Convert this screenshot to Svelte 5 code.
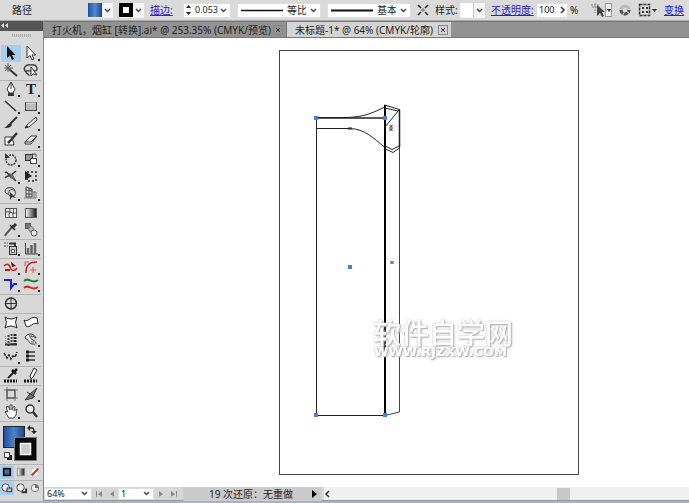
<script>
  const arrow = 'M5 1 L5 13 L8 10.5 L10 15 L12 14 L10 10 L13.500 10 Z';

  const groups = [
    [
      { n: 'Selection', active: true, s: `<path d="${arrow}" fill="#151515"/>` },
      { n: 'Direct selection', more: true, s: `<path d="${arrow}" fill="#fff" stroke="#333"/>` }
      ,
      { n: 'Magic wand', s: '<path d="M7 7 L15 14" stroke="#333" stroke-width="2"/><path d="M6 1 V10 M2 6 H11 M3 3 L9 9 M9 3 L3 9" stroke="#555"/>' },
      { n: 'Lasso', s: '<path d="M4 10 C0 6 4 2 9 3 C15 2 17 8 13 9 C9 10 4 7 4 10 C4 12 8 12 7 14" fill="none" stroke="#444" stroke-width="1.500"/><path d="M9 5 V14 L11 12 L15 13 Z" fill="#fff" stroke="#333"/>' }
    ],
    [
      { n: 'Pen', more: true, s: '<path d="M9 1 L13 8 L11 12 H7 L5 8 Z" fill="#fff" stroke="#333"/><path d="M9 2 V8" stroke="#333"/><rect x="6" y="12" width="6" height="3" fill="#333"/>' },
      { n: 'Type', more: true, text: 'T' },
      { n: 'Line', more: true, s: '<path d="M3 3 L14 13" stroke="#333" stroke-width="1.500"/>' },
      { n: 'Rectangle', more: true, s: '<rect x="3.500" y="4.500" width="11" height="8" fill="#bbb" stroke="#444"/><path d="M4 5 H14" stroke="#eee"/>' },
      { n: 'Brush', s: '<path d="M15 2 L8 9" stroke="#333" stroke-width="2"/><path d="M9 8 L10 10 C8 13 6 13 2 13 C5 12 5 9 9 8" fill="#333"/>' },
      { n: 'Pencil', more: true, s: '<path d="M14 2 L15 5 L7 12 L3 13 L5 10 Z" fill="#eee" stroke="#333"/><path d="M3 13 L6 12 L5 10Z" fill="#222"/>' },
      { n: 'Blob brush', s: '<path d="M3 5 H10 L12 13 H3 Z" fill="#fff" stroke="#333"/><path d="M15 1 L8 9 L6 11" stroke="#333" stroke-width="2.500"/>' },
      { n: 'Eraser', more: true, s: '<path d="M3 10 L9 4 H15 L9 12 H3 Z M3 10 H9 L15 4" fill="#fff" stroke="#333"/>' }
    ],
    [
      { n: 'Rotate', more: true, s: '<circle cx="9" cy="9" r="5" fill="none" stroke="#333" stroke-width="1.500" stroke-dasharray="2 1"/><path d="M3 2 V7 H8 Z" fill="#333"/>' },
      { n: 'Scale', more: true, s: '<rect x="3.500" y="3.500" width="7" height="6" fill="#999" stroke="#333"/><rect x="8.500" y="7.500" width="6" height="5" fill="#fff" stroke="#444"/><path d="M10 3 H14 V6" fill="none" stroke="#444"/>' },
      { n: 'Width', more: true, s: '<path d="M3 5 C5 2 6 8 9 7 L14 3 M3 10 C6 6 9 8 14 13" fill="none" stroke="#333" stroke-width="1.500"/><path d="M7 5 L11 7 L14 12 L8 10 Z" fill="#666"/>' },
      { n: 'Free transform', s: '<rect x="5" y="4" width="9" height="9" fill="none" stroke="#222" stroke-width="1.500" stroke-dasharray="2 2"/><path d="M3 3 V12 L10 8 Z" fill="#222"/>' },
      { n: 'Shape builder', more: true, s: '<ellipse cx="8" cy="6" rx="5" ry="3.500" fill="#ccc" stroke="#444"/><circle cx="10" cy="8" r="3.500" fill="#ddd" stroke="#555"/><path d="M8 7 V15 L10 12 L14 13 Z" fill="#333"/>' },
      { n: 'Perspective grid', more: true, s: '<path d="M4 2 L10 4 V12 H4 Z M4 5 L10 6 M4 9 H10 M7 3 V12" fill="#ddd" stroke="#444"/><path d="M10 7 H14 V13 H2 M12 7 V13" fill="none" stroke="#777"/>' }
    ],
    [
      { n: 'Mesh', s: '<rect x="3.500" y="4.500" width="11" height="9" fill="#eee" stroke="#555"/><path d="M3 9 C7 5 11 12 15 8 M7 4 C10 8 5 10 8 14 M11 4 C13 8 9 10 12 14" fill="none" stroke="#444"/>' },
      { n: 'Gradient', s: '<defs><linearGradient id="tool-gradient"><stop stop-color="#fff"/><stop offset="1" stop-color="#111"/></linearGradient></defs><rect x="3.500" y="4.500" width="11" height="9" fill="url(#tool-gradient)" stroke="#555"/>' },
      { n: 'Eyedropper', more: true, s: '<path d="M11 5 L4 13 L3 15" stroke="#555" stroke-width="2"/><path d="M8 4 L13 9" stroke="#222" stroke-width="1.500"/><path d="M11 6 L14 3" stroke="#333" stroke-width="3"/>' },
      { n: 'Blend', s: '<rect x="3.500" y="2.500" width="5" height="5" fill="#777" stroke="#555"/><circle cx="9" cy="8" r="2.500" fill="#bbb" stroke="#777"/><circle cx="12" cy="12" r="3" fill="#eee" stroke="#555"/>' }
    ],
    [
      { n: 'Symbol sprayer', more: true, s: '<rect x="7.500" y="6.500" width="7" height="8" fill="#ccc" stroke="#333"/><path d="M7 3.500 H13 V6" fill="none" stroke="#333" stroke-width="2"/><path d="M9.500 9.500 H12.500 V12.500 H9.500Z" fill="#fff" stroke="#555"/><path d="M2 3 H6 M2 6 H6" stroke="#555" stroke-dasharray="2 1"/>' },
      { n: 'Graph', more: true, s: '<path d="M3.500 3 V14 H16" fill="none" stroke="#444"/><path d="M6 14 V8 M9.500 14 V5 M13 14 V3" stroke="#666" stroke-width="2.500"/>' }
    ],
    [
      { n: 'Reshape path', more: true, s: '<path d="M2 7 C6 3 8 7 9 10 C10 12 13 12 15 9" fill="none" stroke="#c21d1d" stroke-width="1.500"/><path d="M9 3 L14 7 L10 8 Z" fill="#5a1111"/><path d="M3 11 H8" stroke="#b02020" stroke-width="2"/>' },
      { n: 'Round corner', more: true, s: '<path d="M4 14 C4 6 7 3 15 3" fill="none" stroke="#b32727" stroke-width="1.500"/><path d="M3 3 H7 M3 3 V7 M11 8 V14 M8 11 H14" stroke="#e05252"/>' },
      { n: 'Corner path', more: true, s: '<path d="M2 4 H9 V12 L12 8 H15" fill="none" stroke="#2020c8" stroke-width="2"/>' },
      { n: 'Parallel path', more: true, s: '<path d="M2 5 C7 0 9 9 16 4" fill="none" stroke="#16803a" stroke-width="2"/><path d="M2 12 C7 7 9 16 16 11" fill="none" stroke="#cf2b2b" stroke-width="2"/>' }
    ],
    [
      { n: 'Target', s: '<circle cx="9" cy="8.500" r="5.500" fill="none" stroke="#333" stroke-width="1.500"/><path d="M9 2 V15 M3 8.500 H15" stroke="#333"/>' }
    ],
    [
      { n: 'Envelope', s: '<path d="M3 3 Q9 7 15 3 Q12 8 15 14 Q9 10 3 14 Q6 8 3 3Z" fill="#fff" stroke="#222"/>' },
      { n: 'Flag warp', s: '<path d="M2 6 C6 9 9 1 15 4 L16 10 C11 7 8 15 4 12 Z" fill="#fff" stroke="#222"/>' },
      { n: 'Halftone', s: '<path d="M3.500 5 V15" stroke="#888" stroke-dasharray="1 1"/><path d="M6.500 4 V15 M9.500 3 V15" stroke="#444" stroke-width="2" stroke-dasharray="2 1"/><path d="M13 3 V15" stroke="#222" stroke-width="3" stroke-dasharray="2 1"/><path d="M3 13.500 H15" stroke="#333" stroke-width="2"/>' },
      { n: 'Twirl', more: true, s: '<path d="M3 6 C6 1 13 3 14 7 C9 3 6 7 11 9 C15 11 15 14 11 13 C6 13 8 9 4 8Z" fill="#eee" stroke="#333"/><path d="M7 5 H10 M9 11 H12" stroke="#555"/>' },
      { n: 'Zigzag', more: true, s: '<path d="M2 5 L5 10 L7 7 L9 11 L11 8 L13 9 L15 4" fill="none" stroke="#222" stroke-width="1.500" stroke-dasharray="3 1"/>' },
      { n: 'Align points', s: '<path d="M7 4 H13 M7 8 H13 M7 12 H13" stroke="#333" stroke-width="1.500"/><path d="M4 4 H7 M4 8 H7 M4 12 H7" stroke="#111" stroke-width="3"/>' }
    ],
    [
      { n: 'Colour sampler', s: '<path d="M6 11 L12 5" stroke="#222" stroke-width="2"/><path d="M10 3 L14 7 M12 5 L15 2" stroke="#111" stroke-width="2.500"/><path d="M2 14 H15" stroke="#111" stroke-width="3" stroke-dasharray="2 1"/>' },
      { n: 'Tint sampler', s: '<path d="M9 12 L8 9 L12 1 L15 3 L11 10 Z" fill="#fff" stroke="#222"/><path d="M2 14 H15" stroke="#111" stroke-width="3" stroke-dasharray="2 1"/>' }
    ],
    [
      { n: 'Artboard', s: '<rect x="5" y="4" width="8" height="8" stroke="#555" stroke-width="1.500"/><path d="M5 1 V4 M13 12 V15 M2 4 H5 M13 12 H16 M13 4 H16 M5 12 V15" stroke="#777"/>' },
      { n: 'Slice', more: true, s: '<path d="M15 2 L8 8 L3 14 L11 12 L12 8 Z" fill="#777" stroke="#333"/><path d="M5 6 L13 11" stroke="#333"/>' },
      { n: 'Hand', more: true, s: '<path d="M7 15 L3 9 L4 8 L6 9 L4 4 L6 3 L8 7 V2 H10 V7 L12 3 L13 4 L12 8 L15 6 L14 12 L12 15Z" fill="#fff" stroke="#444"/>' },
      { n: 'Zoom', s: '<circle cx="8" cy="6" r="4" fill="#eee" stroke="#333" stroke-width="1.500"/><path d="M11 9 L15 14" stroke="#333" stroke-width="2.500"/>' }
    ]
  ];

  const modes = [
    { n: 'Colour', active: true, s: '<rect x="4" y="4" width="7" height="7" fill="#4a6da0" stroke="#111" stroke-width="2"/>' },
    { n: 'Gradient fill', s: '<rect x="3.500" y="3.500" width="8" height="8" fill="url(#tool-gradient)" stroke="#999"/>' },
    { n: 'None', s: '<rect x="3.500" y="3.500" width="8" height="8" fill="#fff" stroke="#ccc"/><path d="M4 11 L11 4" stroke="#d22" stroke-width="2"/>' }
  ];
  const screens = [
    { n: 'Draw normal', active: true, s: '<circle cx="6" cy="7" r="4" fill="#eee" stroke="#444"/><rect x="7.500" y="7.500" width="5" height="4" fill="#bbb" stroke="#333"/>' },
    { n: 'Draw behind', s: '<circle cx="7" cy="7" r="4" fill="#eee" stroke="#444"/><path d="M8 12 H13 V8" fill="none" stroke="#333" stroke-width="2"/>' },
    { n: 'Draw inside', s: '<circle cx="7.500" cy="7.500" r="4" fill="#eee" stroke="#777"/><path d="M7.500 7.500 H11 A4 4 0 0 0 7.500 4Z" fill="#666"/>' }
  ];
</script>

{#snippet chevron()}
  <svg class="chevron" width="7" height="5" viewBox="0 0 7 5"><path d="M1 1 L3.500 3.500 L6 1" fill="none" stroke="#444" stroke-width="1.400" /></svg>
{/snippet}

<div class="app">
  <header>
    <span class="kind">路径</span>
    <button class="combo" aria-label="填色"><span class="fill"></span>{@render chevron()}</button>
    <button class="combo" aria-label="描边颜色"><span class="stroke"></span>{@render chevron()}</button>
    <a class="stroke-link" href="#stroke">描边:</a>
    <div class="field weight">
      <svg width="9" height="14" viewBox="0 0 9 14"><path d="M2 5 L4.500 2 L7 5Z M2 9 L4.500 12 L7 9Z" fill="#222" /></svg>
      <input aria-label="描边粗细" value="0.053" />
      {@render chevron()}
    </div>
    <label class="field line">
      <svg width="42" height="3" viewBox="0 0 42 3"><path d="M0 1.500 H42" stroke="#111" stroke-width="1.500" /></svg>
      <select aria-label="宽度配置"><option>等比</option></select>
      {@render chevron()}
    </label>
    <label class="field line">
      <svg width="42" height="3" viewBox="0 0 42 3"><path d="M0 1.500 H42" stroke="#111" stroke-width="2" /></svg>
      <select aria-label="画笔定义"><option>基本</option></select>
      {@render chevron()}
    </label>
    <svg width="12" height="12" viewBox="0 0 12 12"><path d="M1 1 L4 4 M11 1 L8 4 M1 11 L4 8 M11 11 L8 8" stroke="#222" stroke-width="1.500" /><path d="M5 5 H7 V7 H5Z" fill="none" stroke="#777" /></svg>
    <div class="pair">
      <span class="style-label">样式:</span>
      <button class="combo" aria-label="样式"><span class="blank"></span>{@render chevron()}</button>
    </div>
    <div class="pair">
      <a class="opacity-link" href="#opacity">不透明度:</a>
      <div class="field opacity">
        <input aria-label="不透明度" value="100" />
        <svg width="8" height="8" viewBox="0 0 8 8"><path d="M2 1 L5 4 L2 7" fill="none" stroke="#333" stroke-width="1.500" /></svg>
      </div>
      <span class="percent">%</span>
    </div>
    <button class="plain" aria-label="选择类似的对象">
      <svg width="22" height="16" viewBox="0 0 22 16"><path d="M1 3 H9 M2 5 H10 M5 1 V11" stroke="#888" stroke-dasharray="2 1" /><path d="M7 3 V14 L10 11 L12 15 L14 14 L12 10 H15Z" fill="#444" /><rect x="15.500" y="1.500" width="6" height="13" fill="#eee" stroke="#999" /><path d="M17 7 H21 L19 10Z" fill="#333" /></svg>
    </button>
    <button class="plain" aria-label="重新着色">
      <svg width="14" height="14" viewBox="0 0 14 14"><circle cx="7" cy="7" r="4" fill="#d8d8d8" stroke="#bbb" stroke-width="3" /><path d="M3 7 A4 4 0 0 0 11 7" fill="none" stroke="#555" stroke-width="3" stroke-dasharray="4 1" /></svg>
    </button>
    <button class="plain" aria-label="对齐">
      <svg width="20" height="14" viewBox="0 0 20 14"><rect x="1.500" y="1.500" width="10" height="11" fill="none" stroke="#333" stroke-width="1.500" stroke-dasharray="3 1" /><path d="M4 4 H6 V6 H4Z M8 4 H10 V6 H8Z M4 8 H6 V10 H4Z M8 8 H10 V10 H8Z" fill="#333" /><path d="M14 6 H19 L16.500 9Z" fill="#333" /></svg>
    </button>
    <a href="#transform">变换</a>
  </header>

  <div class="body">
    <aside>
      <div class="handle"><svg width="8" height="5" viewBox="0 0 8 5"><path d="M3 0 V5 L0 2.500Z M7 0 V5 L4 2.500Z" fill="#ddd" /></svg></div>
      <div class="grip"></div>
      {#each groups as group}
        <div class="group">
          {#each group as t}
            <button class="tool" class:active={t.active} aria-label={t.n}>
              {#if t.text}<span class="glyph">{t.text}</span>{:else}
                <svg width="18" height="17" viewBox="0 0 18 17" fill="none">{@html t.s}</svg>
              {/if}
              {#if t.more}<span class="more"></span>{/if}
            </button>
          {/each}
        </div>
      {/each}
      <div class="colours">
        <svg width="40" height="42" viewBox="0 0 40 42">
          <defs><linearGradient id="blue" x2="1" y2="0"><stop stop-color="#1f4e9b" /><stop offset="0.500" stop-color="#4c83cd" /><stop offset="1" stop-color="#1d4586" /></linearGradient></defs>
          <rect x="3.500" y="4.500" width="21" height="21" fill="url(#blue)" stroke="#222" />
          <path d="M14.500 15.500 H36.500 V38.500 H14.500Z" fill="#0a0a0a" stroke="#777" />
          <rect x="20.500" y="21.500" width="10" height="11" fill="#ccc" stroke="#fff" stroke-width="1.500" />
          <path d="M29 6 H32 Q34 6 34 10" fill="none" stroke="#222" stroke-width="1.500" /><path d="M27 6 L30 3 V9Z M31 9 H37 L34 12Z" fill="#222" />
          <rect x="7" y="33" width="5" height="5" fill="#222" /><rect x="4.500" y="30.500" width="5" height="5" fill="#fff" stroke="#444" />
        </svg>
      </div>
      {#each [modes, screens] as row}
        <div class="strip">
          {#each row as m}
            <button class="mode" class:active={m.active} aria-label={m.n}><svg width="14" height="14" viewBox="0 0 15 15" fill="none">{@html m.s}</svg></button>
          {/each}
        </div>
      {/each}
    </aside>

    <main>
      <nav>
        <div class="tab first"><span>打火机，烟缸 [转换].ai* @ 253.35% (CMYK/预览)</span><button class="close" aria-label="关闭"><svg width="8" height="8" viewBox="0 0 8 8"><path d="M2 2 L6 6 M6 2 L2 6" stroke="#333" /></svg></button></div>
        <div class="tab current"><span>未标题-1* @ 64% (CMYK/轮廓)</span><button class="close" aria-label="关闭"><svg width="8" height="8" viewBox="0 0 8 8"><path d="M2 2 L6 6 M6 2 L2 6" stroke="#333" /></svg></button></div>
      </nav>

      <div class="canvas">
        <svg width="100%" height="100%">
          <g transform="translate(-44 -38)" fill="none" stroke="#222">
            <rect x="279.500" y="50.500" width="299" height="424" stroke="#444" />
            <path d="M316.500 118 V415.500 H385" />
            <path d="M316 118 H385" stroke-width="1.500" />
            <path d="M316 117.500 H346 C365 117 372 113 385 107" />
            <path d="M316 128.500 H350 C365 129 373 138 385 147.500" />
            <path d="M385 105 V415" stroke="#000" stroke-width="2" />
            <path d="M399.500 109 V412 L385 415.500" stroke="#444" />
            <path d="M384.500 105 L399.500 109.500 V148 L393 152.500 L384.500 148.500" />
            <path d="M385 108 L398 111 M385 127 L399 110 M385 146 L392 149.500 L399 146" />
            <path d="M399.500 110 V147" stroke-width="1.500" />
            <path d="M348.500 127 L351.500 130 M351.500 127 L348.500 130 M389.500 125 L392.500 128 M392.500 125 L389.500 128 M389.500 128 L392.500 131 M392.500 128 L389.500 131 M390.500 261 L393.500 264 M393.500 261 L390.500 264" />
            <g fill="#4a80dc" stroke="none">
              <rect x="314" y="116" width="4" height="4" /><rect x="383" y="116" width="4" height="4" />
              <rect x="348" y="265" width="4" height="4" />
              <rect x="314" y="413" width="4" height="4" /><rect x="383" y="413" width="4" height="4" />
            </g>
            <g class="mark">
              <text class="mark-name" x="373" y="344">软件自学网</text>
              <text class="mark-site" x="374" y="356">WWW.RJZXW.COM</text>
            </g>
          </g>
        </svg>
      </div>

      <footer>
        <label class="field zoom"><select aria-label="缩放"><option>64%</option></select>{@render chevron()}</label>
        <button class="step" aria-label="首项"><svg width="8" height="8" viewBox="0 0 8 8"><path d="M1 1 H2 V7 H1Z M7 1 V7 L3 4Z" fill="#888" /></svg></button>
        <button class="step" aria-label="上一项"><svg width="8" height="8" viewBox="0 0 8 8"><path d="M6 1 V7 L2 4Z" fill="#888" /></svg></button>
        <label class="field page"><select aria-label="画板"><option>1</option></select>{@render chevron()}</label>
        <button class="step" aria-label="下一项"><svg width="8" height="8" viewBox="0 0 8 8"><path d="M2 1 V7 L6 4Z" fill="#888" /></svg></button>
        <button class="step" aria-label="末项"><svg width="8" height="8" viewBox="0 0 8 8"><path d="M6 1 H7 V7 H6Z M1 1 V7 L5 4Z" fill="#888" /></svg></button>
        <div class="status"><span>19 次还原：无重做</span><svg width="6" height="8" viewBox="0 0 6 8"><path d="M1 0 V8 L6 4Z" fill="#000" /></svg></div>
        <div class="scroll"><svg width="7" height="8" viewBox="0 0 7 8"><path d="M5 1 L2 4 L5 7" fill="none" stroke="#333" stroke-width="1.500" /></svg><div class="track"><div class="thumb"></div></div></div>
      </footer>
    </main>
  </div>
</div>

<style>
  .app {
    display: flex;
    flex-direction: column;
    height: 100vh;
    box-sizing: border-box;
    border-bottom: 2px solid #a9b3c4;
    overflow: hidden;
    background: #d6d6d6;
    color: #222;
    font: 10px/14px "Noto Sans", "Noto Sans CJK SC", sans-serif;
    white-space: nowrap;
  }
  button, input, select { font: inherit; color: inherit; margin: 0; padding: 0; border: 0; background: none; }
  select { appearance: none; outline: 0; }
  svg { display: block; flex: none; }
  a { color: #2a22cc; text-decoration: underline; }

  header {
    display: flex;
    align-items: center;
    gap: 6px;
    height: 21px;
    flex: none;
    padding-left: 12px;
    box-sizing: border-box;
    border-bottom: 1px solid #aaa;
    background: #dadada;
  }
  .kind { width: 70px; }
  .combo { display: flex; align-items: center; justify-content: space-between; width: 25px; height: 15px; flex: none; box-sizing: border-box; padding-right: 2px; background: #f4f4f4; }
  .fill, .stroke, .blank { width: 14px; height: 14px; box-sizing: border-box; }
  .fill { background: linear-gradient(90deg, #1f4e9b, #5289d2 50%, #1d4586); }
  .stroke { border: 4px solid #000; background: #fff; }
  .blank { background: #fff; border-right: 1px solid #ccc; }
  .stroke-link { width: 27px; }
  .field { display: flex; align-items: center; box-sizing: border-box; height: 15px; flex: none; background: #fff; border: 1px solid #ddd; padding-right: 3px; }
  .field input, .field select { flex: 1; min-width: 0; width: 0; }
  .weight { width: 48px; font-size: 9px; }
  .weight input { padding-left: 2px; }
  .line { width: 84px; gap: 4px; padding-left: 3px; }
  .pair { display: flex; align-items: center; gap: 2px; }
  .style-label { width: 23px; }
  .opacity-link { width: 43px; }
  .opacity { width: 32px; font-size: 9px; padding-left: 2px; padding-right: 0; }
  .percent { width: 14px; }

  .body { display: flex; flex: 1; min-height: 0; }
  aside { width: 44px; flex: none; box-sizing: border-box; border-right: 1px solid #888; background: #d8d8d8; }
  .handle { height: 10px; padding: 2px 0 0 1px; box-sizing: border-box; background: #555; }
  .grip { height: 13px; width: 20px; margin: 0 auto; box-sizing: border-box; border-bottom: 7px solid #d8d8d8; border-top: 3px solid #d8d8d8; background: repeating-linear-gradient(90deg, #aaa 0 1px, #d8d8d8 1px 2px); }
  .group { display: grid; grid-template-columns: 20px 20px; padding: 0 0 1px 1px; border-top: 1px solid #b4b4b4; margin-right: 2px; }
  .grip + .group { border-top-color: transparent; }
  .tool { position: relative; display: flex; justify-content: center; height: 17px; }
  .active { background: #a9cdec; }
  .glyph { font: bold 15px/17px "Liberation Serif", serif; }
  .more { position: absolute; right: 1px; bottom: 1px; width: 2px; height: 2px; background: #222; }
  .colours { height: 43px; border-top: 1px solid #b4b4b4; box-sizing: border-box; }
  .strip { display: flex; height: 16px; border-top: 1px solid #b4b4b4; box-sizing: border-box; }
  .mode { display: flex; justify-content: center; width: 14px; height: 14px; }

  main { display: flex; flex-direction: column; flex: 1; min-width: 0; }
  nav { display: flex; height: 17px; flex: none; box-sizing: border-box; border-top: 1px solid #777; border-bottom: 1px solid #777; background: #929292; }
  .tab { display: flex; align-items: center; justify-content: space-between; box-sizing: border-box; padding: 0 3px 0 8px; }
  .first { width: 243px; border-right: 1px solid #777; }
  .current { width: 164px; background: #d4d4d4; }
  .close { display: flex; border: 1px solid #888; }

  .canvas { flex: 1; min-height: 0; background: #fff; overflow: hidden; }
  .mark text { fill: #fff; stroke: none; filter: drop-shadow(1px 1px 0 #bbb) drop-shadow(0 0 1px #bbb); }
  .mark-name { font-size: 28px; font-weight: 500; }
  .mark-site { font: bold 13px "DejaVu Sans", sans-serif; }

  footer { display: flex; align-items: center; height: 14px; flex: none; box-sizing: border-box; border-bottom: 1px solid #999; background: #d6d6d6; }
  footer .field { height: 12px; }
  .zoom { width: 48px; font-size: 9px; padding-left: 2px; }
  .page { width: 36px; font-size: 9px; padding-left: 2px; }
  .step { display: flex; justify-content: center; width: 13px; }
  .status { display: flex; align-items: center; justify-content: space-between; box-sizing: border-box; width: 138px; padding: 0 4px 0 26px; margin-left: 3px; background: #cacaca; }
  .scroll { display: flex; align-items: center; flex: 1; height: 13px; margin-left: 3px; background: #f0f0f0; }
  .track { flex: 1; height: 12px; padding-left: 62%; }
  .thumb { width: 13px; height: 12px; background: #c8c8c8; }
</style>
